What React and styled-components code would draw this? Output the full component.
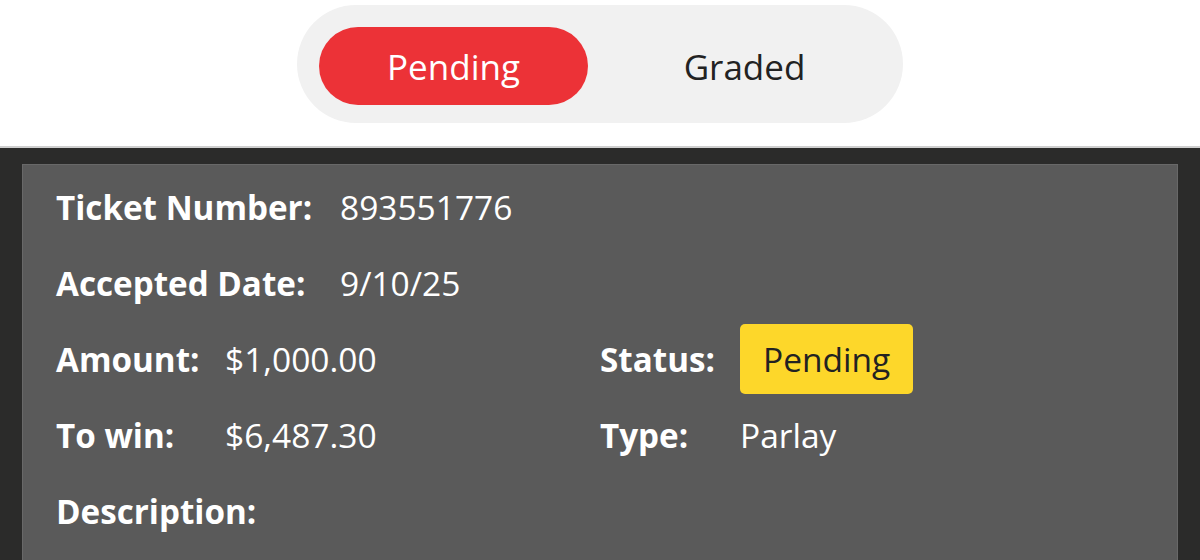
import React, { useState } from "react";
import styled, { createGlobalStyle } from "styled-components";

const Global = createGlobalStyle`
  html, body { margin: 0; padding: 0; background: #ffffff; }
  body { font-family: "Open Sans", "Noto Sans", sans-serif; overflow: hidden; }
  * { box-sizing: border-box; }
`;

const Page = styled.div`
  width: 1200px;
  height: 560px;
  display: flex;
  flex-direction: column;
  background: #2b2b2a;
`;

const Header = styled.header`
  background: #ffffff;
  height: 148px;
  padding-top: 5px;
  display: flex;
  justify-content: center;
  align-items: flex-start;
  border-bottom: 2px solid #cfcfcf;
`;

const Toggle = styled.div`
  width: 606px;
  height: 118px;
  border-radius: 59px;
  background: #f1f1f1;
  display: flex;
  align-items: flex-start;
  padding: 22px 22px 0;
`;

const ToggleButton = styled.button`
  width: 269px;
  height: 78px;
  border: none;
  border-radius: 39px;
  background: ${(p) => (p.$active ? "#ec3237" : "transparent")};
  color: ${(p) => (p.$active ? "#ffffff" : "#222222")};
  font-family: "Open Sans", sans-serif;
  font-size: 35px;
  font-weight: 400;
  cursor: pointer;
  padding: 0;
  & + & { margin-left: 22px; }
`;

const Body = styled.main`
  flex: 1;
  padding: 16px 22px 0;
`;

const Card = styled.section`
  background: #5a5a5a;
  border: 1px solid #686868;
  border-bottom: none;
  height: 100%;
  padding: 4px 0 0 33px;
  color: #ffffff;
`;

const Row = styled.div`
  display: grid;
  grid-template-columns: ${(p) => p.$cols};
  align-items: center;
  height: 76px;
`;

const Label = styled.span`
  font-weight: 700;
  font-size: 33.2px;
`;

const Value = styled.span`
  font-weight: 400;
  font-size: 33.5px;
`;

const Badge = styled.span`
  justify-self: start;
  background: #fdd72a;
  color: #222222;
  border-radius: 5px;
  font-size: 33.5px;
  height: 70px;
  padding: 0 23px;
  display: inline-flex;
  align-items: center;
`;

const WIDE = "284px auto";
const SPLIT = "169px 375px 140px auto";

export default function App() {
  const [tab, setTab] = useState("pending");
  return (
    <>
      <Global />
      <Page>
        <Header>
          <Toggle>
            <ToggleButton $active={tab === "pending"} onClick={() => setTab("pending")}>
              Pending
            </ToggleButton>
            <ToggleButton $active={tab === "graded"} onClick={() => setTab("graded")}>
              Graded
            </ToggleButton>
          </Toggle>
        </Header>
        <Body>
          <Card>
            <Row $cols={WIDE}>
              <Label>Ticket Number:</Label>
              <Value>893551776</Value>
            </Row>
            <Row $cols={WIDE}>
              <Label>Accepted Date:</Label>
              <Value>9/10/25</Value>
            </Row>
            <Row $cols={SPLIT}>
              <Label>Amount:</Label>
              <Value>$1,000.00</Value>
              <Label>Status:</Label>
              <Badge>Pending</Badge>
            </Row>
            <Row $cols={SPLIT}>
              <Label>To win:</Label>
              <Value>$6,487.30</Value>
              <Label>Type:</Label>
              <Value>Parlay</Value>
            </Row>
            <Row $cols={WIDE}>
              <Label>Description:</Label>
            </Row>
          </Card>
        </Body>
      </Page>
    </>
  );
}
